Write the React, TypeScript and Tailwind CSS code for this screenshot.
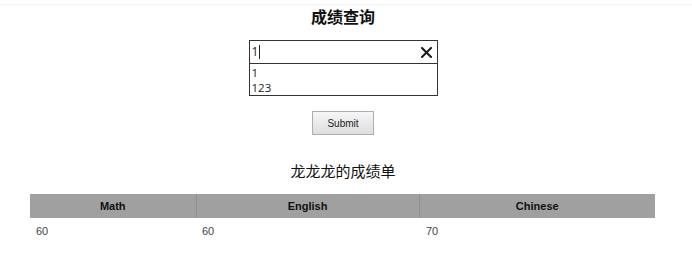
// score query page
const scores = [{ math: 60, english: 60, chinese: 70 }]

function ClearIcon() {
  return (
    <svg className="ml-auto w-[11px] h-[11px]" viewBox="0 0 11 11" fill="none" stroke="#1a1a1a" strokeWidth="2" strokeLinecap="square">
      <path d="M1 1 L10 10 M10 1 L1 10" />
    </svg>
  )
}

function SearchBox() {
  return (
    <div className="w-[189px] mx-auto mt-[11px]" style={{ fontFamily: '"Open Sans", "Noto Sans", sans-serif' }}>
      <div className="h-[24px] border border-[#333] flex items-center pl-[2px] pr-[5px] text-[12px] text-[#222]">
        <span>1</span>
        <span className="w-px h-[14px] bg-[#222] ml-px" />
        <ClearIcon />
      </div>
      <div className="border border-t-0 border-[#333] pl-[2px] text-[11.5px] leading-[15px] text-[#222] pt-px">
        <div>1</div>
        <div>123</div>
      </div>
    </div>
  )
}

export default function App() {
  return (
    <div className="w-[692px] h-[253px] bg-white overflow-hidden" style={{ fontFamily: '"Liberation Sans", Arial, sans-serif' }}>
      <div className="h-[5px] border-b border-[#f2f2f2]" />
      <div className="w-[686px]">
        <h1
          className="text-center text-[16px] leading-[22px] font-bold text-[#111] mt-[2px]"
          style={{ fontFamily: '"Liberation Serif", "Noto Sans CJK SC", serif' }}
        >
          成绩查询
        </h1>
        <SearchBox />
        <div className="flex justify-center mt-[15px]">
          <button className="w-[62px] h-[24px] border border-[#adadad] bg-gradient-to-b from-[#f6f6f6] to-[#dedede] text-[10px] text-[#222]">
            Submit
          </button>
        </div>
        <h2
          className="text-center text-[15px] leading-[20px] text-[#111] mt-[26px]"
          style={{ fontFamily: '"Noto Sans CJK SC", sans-serif' }}
        >
          龙龙龙的成绩单
        </h2>
      </div>
      <table className="ml-[30px] mt-[13px] w-[625px] border-collapse text-[11px]">
        <thead>
          <tr className="bg-[#a0a0a0] h-[24px]">
            <th className="w-[166px] font-bold text-[#111] border-r border-[#8f8f8f]">Math</th>
            <th className="w-[223px] font-bold text-[#111] border-r border-[#8f8f8f]">English</th>
            <th className="font-bold text-[#111]">Chinese</th>
          </tr>
        </thead>
        <tbody>
          {scores.map((s, i) => (
            <tr key={i} className="h-[27px] text-[#444]">
              <td className="pl-[6px]">{s.math}</td>
              <td className="pl-[6px]">{s.english}</td>
              <td className="pl-[7px]">{s.chinese}</td>
            </tr>
          ))}
        </tbody>
      </table>
    </div>
  )
}
